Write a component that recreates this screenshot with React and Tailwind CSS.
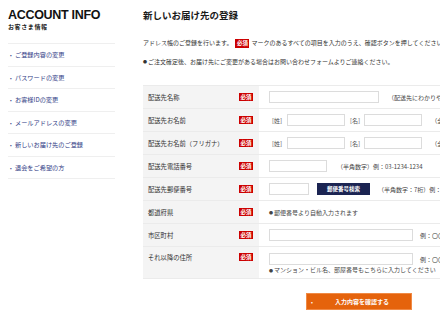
import React from "react";

const menu = [
  "ご登録内容の変更",
  "パスワードの変更",
  "お客様IDの変更",
  "メールアドレスの変更",
  "新しいお届け先のご登録",
  "退会をご希望の方",
];

const Badge = () => (
  <span className="inline-flex items-center justify-center w-[14px] h-[8px] bg-[#cc0000] text-white text-[5.5px] font-bold leading-none">
    必須
  </span>
);

const Dot = () => <span className="text-[4px] mr-[1px] align-middle">●</span>;

const Input = ({ w }) => <span className={`block h-[12px] border border-[#dcdcdc] bg-white ${w}`} />;

const Hint = ({ children, className = "" }) => (
  <span className={`text-[6px] text-[#444] whitespace-nowrap ${className}`}>{children}</span>
);

const Row = ({ label, tall, children }) => (
  <div className={`flex border-b border-[#ebebeb] ${tall ? "h-[32px]" : "h-[23px]"}`}>
    <div
      className={`w-[116px] shrink-0 bg-[#f4f4f4] flex justify-between pl-[5px] pr-[6px] ${
        tall ? "items-start pt-[6px]" : "items-center"
      }`}
    >
      <span className="text-[6.3px] text-[#333] whitespace-nowrap">{label}</span>
      <Badge />
    </div>
    <div className={`flex-1 pl-[10px] flex ${tall ? "flex-col pt-[6px]" : "items-center"}`}>{children}</div>
  </div>
);

const NameInputs = ({ note }) => (
  <>
    <Hint className="ml-[3px] text-[#555]">[姓]</Hint>
    <span className="ml-[5px]">
      <Input w="w-[58px]" />
    </span>
    <Hint className="ml-[5px] text-[#555]">[名]</Hint>
    <span className="ml-[4px]">
      <Input w="w-[58px]" />
    </span>
    <Hint className="ml-[9px]">{note}</Hint>
  </>
);

export default function App() {
  return (
    <div className="w-[440px] h-[320px] overflow-hidden bg-white flex font-['Noto_Sans_CJK_JP',sans-serif]">
      <aside className="w-[107px] ml-[8px] shrink-0 pt-[8px]">
        <h1 className="font-['Liberation_Sans','Noto_Sans_CJK_JP',sans-serif] text-[12.5px] font-bold leading-[14px] text-[#111] tracking-[-0.3px]">
          ACCOUNT INFO
        </h1>
        <p className="mt-[1px] text-[6px] leading-[8px] font-bold text-[#222] tracking-[0.6px]">お客さま情報</p>
        <ul className="mt-[12px] border-t border-[#efefef]">
          {menu.map((m) => (
            <li key={m} className="h-[22.5px] border-b border-[#efefef] flex items-center text-[6.2px] text-[#2f3b85]">
              <span className="w-[7px] pl-[2px] text-[5px]">•</span>
              {m}
            </li>
          ))}
        </ul>
      </aside>

      <main className="ml-[28px] w-[620px] shrink-0 pt-[8px]">
        <h2 className="text-[9.5px] font-bold leading-[14px] text-[#1a1a1a]">新しいお届け先の登録</h2>
        <p className="mt-[16px] text-[6px] leading-[10px] text-[#333] whitespace-nowrap flex items-center">
          アドレス帳のご登録を行います。
          <span className="ml-[3px] mr-[2px] inline-flex items-center justify-center w-[14px] h-[9px] bg-[#cc0000] text-white text-[5.5px] font-bold">
            必須
          </span>
          マークのあるすべての項目を入力のうえ、確認ボタンを押してください。
        </p>
        <p className="mt-[9px] text-[6px] leading-[10px] text-[#333] whitespace-nowrap">
          <Dot />
          ご注文確定後、お届け先にご変更がある場合はお問い合わせフォームよりご連絡ください。
        </p>

        <div className="mt-[18px] border-t border-[#ebebeb]">
          <Row label="配送先名称">
            <Input w="w-[110px]" />
            <Hint className="ml-[9px]">（配送先にわかりやすい名前をつけてください）</Hint>
          </Row>
          <Row label="配送先お名前">
            <NameInputs note="（全角）" />
          </Row>
          <Row label="配送先お名前（フリガナ）">
            <NameInputs note="（全角カナ）" />
          </Row>
          <Row label="配送先電話番号">
            <Input w="w-[58px]" />
            <Hint className="ml-[10px]">（半角数字）例：03-1234-1234</Hint>
          </Row>
          <Row label="配送先郵便番号">
            <Input w="w-[40px]" />
            <button className="ml-[8px] w-[53px] h-[12px] bg-[#1b2452] text-white text-[5.5px] font-bold flex items-center justify-center">
              郵便番号検索
            </button>
            <Hint className="ml-[8px]">（半角数字：7桁）例：1234567</Hint>
          </Row>
          <Row label="都道府県">
            <Hint>
              <Dot />
              郵便番号より自動入力されます
            </Hint>
          </Row>
          <Row label="市区町村">
            <Input w="w-[144px]" />
            <Hint className="ml-[7px]">例：〇〇市〇〇区</Hint>
          </Row>
          <Row label="それ以降の住所" tall>
            <div className="flex items-center">
              <Input w="w-[144px]" />
              <Hint className="ml-[7px]">例：〇〇町1-2-3</Hint>
            </div>
            <Hint className="mt-[1px] leading-[8px]">
              <Dot />
              マンション・ビル名、部屋番号もこちらに入力してください
            </Hint>
          </Row>
        </div>

        <div className="mt-[14px] ml-[163px]">
          <button className="relative w-[106px] h-[17px] bg-[#e5630c] border border-[#f08a45] text-white text-[6px] font-bold flex items-center justify-center">
            <span className="absolute left-[4px] text-[5px]">•</span>
            <span className="ml-[6px]">入力内容を確認する</span>
          </button>
        </div>
      </main>
    </div>
  );
}
